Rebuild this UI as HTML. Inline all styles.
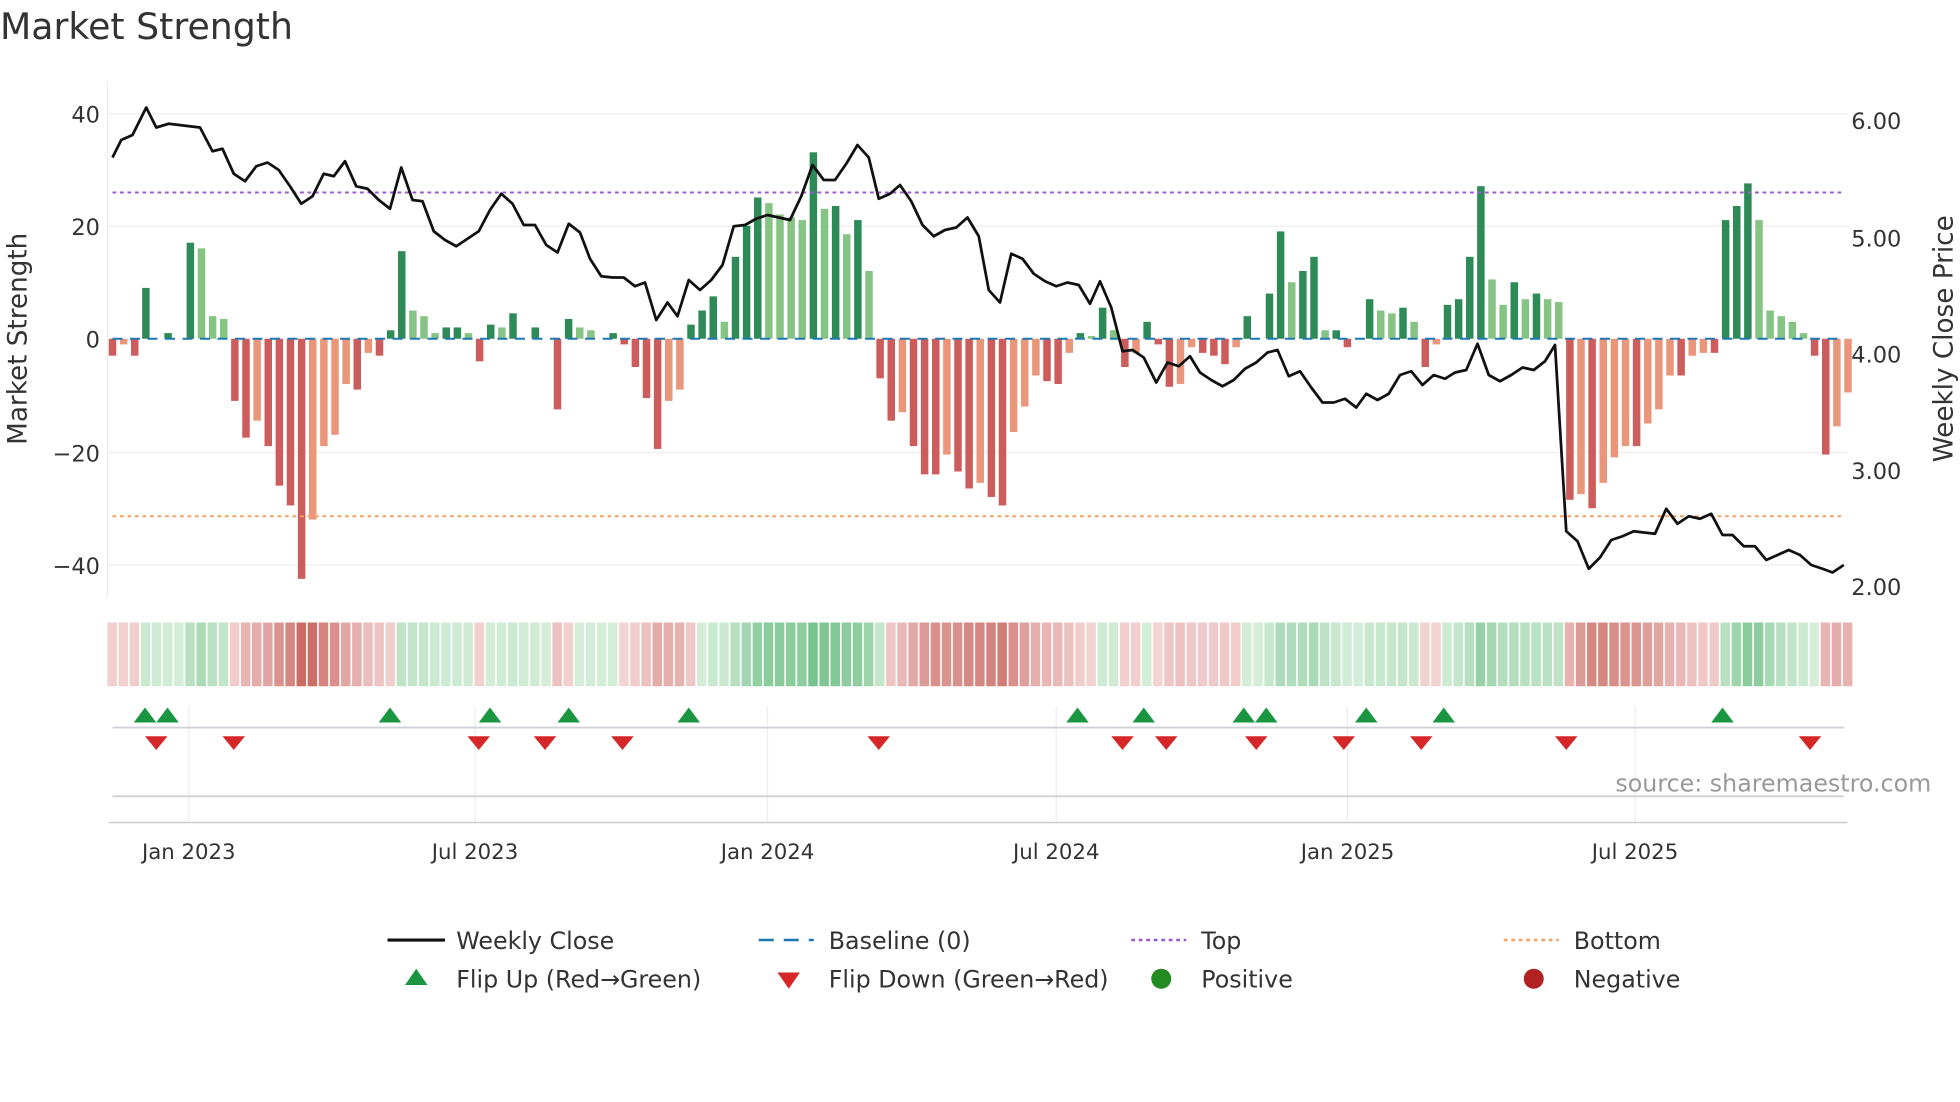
<!DOCTYPE html>
<html><head><meta charset="utf-8"><style>
html,body{margin:0;padding:0;background:#fff;width:1960px;height:1102px;overflow:hidden}
svg{display:block;font-family:"DejaVu Sans","Liberation Sans",sans-serif}
</style></head><body>
<svg id="s" width="1960" height="1102" viewBox="0 0 1568 881.6" xmlns="http://www.w3.org/2000/svg">
<rect width="1568" height="882" fill="#fff"/>
<text x="0" y="31" font-size="29" fill="#333">Market Strength</text>
<g stroke="#eeeeee" stroke-width="1">
<line x1="86" x2="1478" y1="91" y2="91"/><line x1="86" x2="1478" y1="181" y2="181"/><line x1="86" x2="1478" y1="362" y2="362"/><line x1="86" x2="1478" y1="452" y2="452"/>
<line x1="86" x2="86" y1="65" y2="478"/>
</g>
<g stroke="#eeeeee"><line x1="151" x2="151" y1="565" y2="658"/><line x1="380" x2="380" y1="565" y2="658"/><line x1="614" x2="614" y1="565" y2="658"/><line x1="845" x2="845" y1="565" y2="658"/><line x1="1078" x2="1078" y1="565" y2="658"/><line x1="1308" x2="1308" y1="565" y2="658"/></g>
<g id="bars"></g>
<g id="heat"></g>
<line x1="90" x2="1475" y1="271" y2="271" stroke="#1f77b4" stroke-width="1.6" stroke-dasharray="8,6"/>
<line x1="90" x2="1475" y1="154" y2="154" stroke="#9b59d0" stroke-width="1.6" stroke-dasharray="3,3"/>
<line x1="90" x2="1475" y1="413" y2="413" stroke="#f4a460" stroke-width="1.6" stroke-dasharray="3,3"/>
<polyline id="price" fill="none" stroke="#111" stroke-width="2.2" stroke-linejoin="round"/>
<g font-size="18" fill="#333" text-anchor="end">
<text x="80" y="98">40</text><text x="80" y="188">20</text><text x="80" y="278">0</text><text x="80" y="369">−20</text><text x="80" y="459">−40</text>
</g>
<g font-size="18" fill="#333">
<text x="1481" y="103">6.00</text><text x="1481" y="197">5.00</text><text x="1481" y="290">4.00</text><text x="1481" y="383">3.00</text><text x="1481" y="476">2.00</text>
</g>
<text transform="translate(21,271) rotate(-90)" font-size="21" fill="#333" text-anchor="middle">Market Strength</text>
<text transform="translate(1562,271) rotate(-90)" font-size="21" fill="#333" text-anchor="middle">Weekly Close Price</text>
<line x1="90" x2="1475" y1="582" y2="582" stroke="#d0d0d8" stroke-width="1.5"/>
<line x1="90" x2="1475" y1="637" y2="637" stroke="#d0d0d0" stroke-width="1.5"/>
<line x1="87" x2="1478" y1="658" y2="658" stroke="#cccccc" stroke-width="1.2"/>
<g id="flips"></g>
<text x="1545" y="633" font-size="19" fill="#999" text-anchor="end">source: sharemaestro.com</text>
<g font-size="17" fill="#333" text-anchor="middle">
<text x="151" y="687">Jan 2023</text><text x="380" y="687">Jul 2023</text><text x="614" y="687">Jan 2024</text><text x="845" y="687">Jul 2024</text><text x="1078" y="687">Jan 2025</text><text x="1308" y="687">Jul 2025</text>
</g>
<g font-size="19" fill="#333">
<line x1="310" x2="356" y1="752" y2="752" stroke="#111" stroke-width="2.5"/><text x="365" y="759">Weekly Close</text>
<line x1="607" x2="651" y1="752" y2="752" stroke="#1f77b4" stroke-width="2" stroke-dasharray="12,8"/><text x="663" y="759">Baseline (0)</text>
<line x1="905" x2="949" y1="752" y2="752" stroke="#9b59d0" stroke-width="2" stroke-dasharray="3,3"/><text x="961" y="759">Top</text>
<line x1="1203" x2="1247" y1="752" y2="752" stroke="#f4a460" stroke-width="2" stroke-dasharray="3,3"/><text x="1259" y="759">Bottom</text>
<polygon points="324,788 342,788 333,775" fill="#1a9641"/><text x="365" y="790">Flip Up (Red→Green)</text>
<polygon points="622,778 640,778 631,791" fill="#d62728"/><text x="663" y="790">Flip Down (Green→Red)</text>
<circle cx="929" cy="783" r="8" fill="#228b22"/><text x="961" y="790">Positive</text>
<circle cx="1227" cy="783" r="8" fill="#b22222"/><text x="1259" y="790">Negative</text>
</g>
</svg>
<script>
var ns="http://www.w3.org/2000/svg";
var v=[-3,-1,-3,9,0,1,0,17,16,4,3.5,-11,-17.5,-14.5,-19,-26,-29.5,-42.5,-32,-19,-17,-8,-9,-2.5,-3,1.5,15.5,5,4,1,2,2,1,-4,2.5,2,4.5,0,2,0,-12.5,3.5,2,1.5,0,1,-1,-5,-10.5,-19.5,-11,-9,2.5,5,7.5,3,14.5,20,25,24,22,21.5,21,33,23,23.5,18.5,21,12,-7,-14.5,-13,-19,-24,-24,-20.5,-23.5,-26.5,-25.5,-28,-29.5,-16.5,-12,-6.5,-7.5,-8,-2.5,1,0.5,5.5,1.5,-5,-2.5,3,-1,-8.5,-8,-1.5,-2.5,-3,-4.5,-1.5,4,0,8,19,10,12,14.5,1.5,1.5,-1.5,0,7,5,4.5,5.5,3,-5,-1,6,7,14.5,27,10.5,6,10,7,8,7,6.5,-28.5,-27.5,-30,-25.5,-21,-19,-19,-15,-12.5,-6.5,-6.5,-3,-2.5,-2.5,21,23.5,27.5,21,5,4,3,1,-3,-20.5,-15.5,-9.5];
var bars=document.getElementById("bars"),heat=document.getElementById("heat");
function el(t,a,p){var e=document.createElementNS(ns,t);for(var k in a)e.setAttribute(k,a[k]);p.appendChild(e);return e;}
function mix(a,b,t){var r=[];for(var i=0;i<3;i++)r.push(Math.round(a[i]+(b[i]-a[i])*t));return "rgb("+r.join(",")+")";}
var sm=0;
for(var i=0;i<v.length;i++){
 var x=90+8.9*i, val=v[i], prev=i?v[i-1]:0;
 var dark=Math.abs(val)>=Math.abs(prev)||(val*prev<0);
 var col=val>=0?(dark?"#2e8b57":"#86c484"):(dark?"#cd5c5c":"#e9967a");
 var y0=271,y1=271-4.52*val;
 if(Math.abs(val)>0.2) el("rect",{x:x-3,y:Math.min(y0,y1),width:6,height:Math.abs(y1-y0),fill:col},bars);
 sm=sm*0.5+val*0.5;
 var t=Math.min(1,Math.abs(sm)/40);
 var c=sm>=0?mix([214,238,218],[76,175,106],t):mix([243,212,212],[196,88,80],t);
 el("rect",{x:x-4.1,y:498,width:7.6,height:51,fill:c},heat);
}
var p=[90,126,97,112,106,108,117,86,125,102,135,99,160,102,170,121,178,119,187,139,196,145,205,133,214,130,223,136,232,149,241,163,250,157,259,139,267,141,276,129,285,149,294,151,303,160,312,167,321,134,330,160,338,161,347,185,356,192,365,197,374,191,383,185,392,168,401,155,410,163,419,180,428,180,437,196,446,202,455,179,464,186,472,207,481,221,490,222,499,222,508,229,516,226,525,256,534,242,542,253,551,224,560,232,569,224,578,212,587,181,596,180,605,175,614,172,623,174,632,176,641,157,650,132,659,144,668,144,677,131,686,116,695,126,703,159,712,155,720,148,729,161,738,180,747,189,756,184,765,182,774,174,783,189,791,232,800,242,809,203,818,207,827,219,836,225,845,229,854,226,863,228,872,243,880,225,889,246,898,281,906,280,915,286,925,306,934,290,943,293,952,285,960,298,969,304,978,309,987,304,996,295,1005,290,1014,282,1022,280,1031,301,1040,297,1049,310,1058,322,1067,322,1076,319,1085,326,1093,315,1102,320,1111,315,1120,300,1129,297,1138,308,1147,300,1156,303,1164,298,1173,296,1182,275,1191,300,1200,305,1209,300,1218,294,1227,296,1236,289,1244,276,1253,425,1262,433,1271,455,1280,446,1289,432,1298,429,1307,425,1315,426,1324,427,1333,407,1342,419,1351,413,1360,415,1369,411,1378,428,1386,428,1395,437,1404,437,1413,448,1422,444,1431,440,1440,444,1449,452,1458,455,1466,458,1475,452];
var pts=[];for(var j=0;j<p.length;j+=2)pts.push(p[j]+","+p[j+1]);
document.getElementById("price").setAttribute("points",pts.join(" "));
var f=document.getElementById("flips");
[116,134,312,392,455,551,862,915,995,1013,1093,1155,1378].forEach(function(x){el("polygon",{points:(x-9)+",578 "+(x+9)+",578 "+x+",566",fill:"#1a9641"},f);});
[125,187,383,436,498,703,898,933,1005,1075,1137,1253,1448].forEach(function(x){el("polygon",{points:(x-9)+",589 "+(x+9)+",589 "+x+",600",fill:"#d62728"},f);});
</script>
</body></html>
